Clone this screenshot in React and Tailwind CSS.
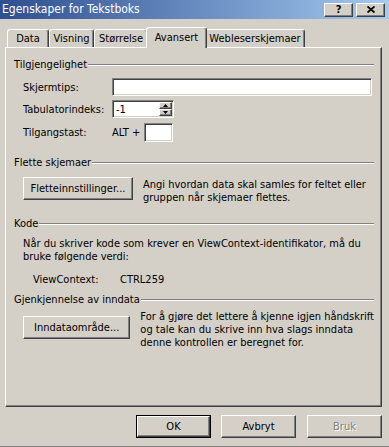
import { Fragment } from "react";

const font = "font-['DejaVu_Sans_Condensed','DejaVu_Sans',sans-serif]";
const raised =
  "border border-t-white border-l-white border-r-[#404040] border-b-[#404040] shadow-[inset_-1px_-1px_#808080]";
const sunken =
  "border border-t-[#808080] border-l-[#808080] border-r-white border-b-white shadow-[inset_1px_1px_#404040,inset_-1px_-1px_#d4d0c8]";

function GroupHeader({ children, className = "" }) {
  return (
    <div className={`flex h-[13px] items-center ${className}`}>
      <span className="whitespace-nowrap">{children}</span>
      <div className="ml-px flex-1 border-t border-b border-t-[#808080] border-b-white" />
    </div>
  );
}

function Lines({ lines, className = "" }) {
  return (
    <p className={`whitespace-nowrap ${className}`}>
      {lines.map((l, i) => (
        <Fragment key={i}>
          {l}
          {i < lines.length - 1 && <br />}
        </Fragment>
      ))}
    </p>
  );
}

function Tab({ label, w, active }) {
  if (active) {
    return (
      <div
        className={`relative z-10 -mx-[2px] -mb-px flex h-[21px] items-start justify-center rounded-t-[3px] border-t border-l border-r border-t-white border-l-white border-r-[#404040] bg-[#d4d0c8] pt-[3px] shadow-[inset_-1px_0_#808080] ${w}`}
      >
        {label}
      </div>
    );
  }
  return (
    <div
      className={`flex h-[18px] items-start justify-center rounded-t-[3px] border-t border-l border-r border-t-white border-l-white border-r-[#404040] pt-[2px] shadow-[inset_-1px_0_#808080] ${w}`}
    >
      {label}
    </div>
  );
}

function Button({ children, className = "", disabled, isDefault }) {
  if (isDefault) {
    return (
      <div className={`border border-black ${className}`}>
        <div className={`flex h-full w-full items-center justify-center ${raised}`}>{children}</div>
      </div>
    );
  }
  return (
    <div
      className={`flex items-center justify-center ${raised} ${
        disabled ? "text-[#808080] [text-shadow:1px_1px_0_#fff]" : ""
      } ${className}`}
    >
      {children}
    </div>
  );
}

function SpinArrow({ up }) {
  return (
    <div className={`flex h-1/2 w-full items-center justify-center bg-[#d4d0c8] ${raised}`}>
      <svg width="5" height="3" viewBox="0 0 5 3">
        <polygon points={up ? "2.5,0 5,3 0,3" : "0,0 5,0 2.5,3"} fill="#000" />
      </svg>
    </div>
  );
}

export default function App() {
  return (
    <div
      className={`${font} h-[447px] w-[389px] overflow-hidden border-b border-b-[#808080] bg-[#d4d0c8] text-[11px] leading-[13px] text-black`}
    >
      {/* title bar */}
      <div className="flex h-[19px] items-center bg-gradient-to-r from-[#2f4f90] to-[#a6caf0] pl-[2px] pr-[4px]">
        <span className="flex-1 text-[12px] text-white">Egenskaper for Tekstboks</span>
        <div className="flex gap-[3px]">
          <div className={`flex h-[14px] w-[29px] items-center justify-center bg-[#d4d0c8] text-[11px] font-bold ${raised}`}>
            ?
          </div>
          <div className={`flex h-[14px] w-[29px] items-center justify-center bg-[#d4d0c8] ${raised}`}>
            <svg width="8" height="7" viewBox="0 0 8 7">
              <path d="M0.5 0.5 L7.5 6.5 M7.5 0.5 L0.5 6.5" stroke="#000" strokeWidth="1.8" />
            </svg>
          </div>
        </div>
      </div>

      {/* tabs */}
      <div className="flex h-[28px] items-end pl-[7px]">
        <Tab label="Data" w="w-[42px]" />
        <Tab label="Visning" w="w-[45px]" />
        <Tab label="Størrelse" w="w-[54px]" />
        <Tab label="Avansert" w="w-[61px]" active />
        <Tab label="Webleserskjemaer" w="w-[100px]" />
      </div>

      {/* panel */}
      <div className="mx-[5px] h-[360px] w-[377px] border-t border-l border-r border-b border-t-white border-l-white border-r-[#404040] border-b-[#404040] pl-[8px] pr-[7px] shadow-[inset_-1px_-1px_#808080]">
        <GroupHeader className="mt-[10px]">Tilgjengelighet</GroupHeader>

        <div className="mt-[7px] flex h-[18px] items-center pl-[9px]">
          <span className="w-[89px]">Skjermtips:</span>
          <div className={`h-[18px] w-[260px] bg-white ${sunken}`} />
        </div>

        <div className="mt-[4px] flex h-[18px] items-center pl-[9px]">
          <span className="w-[89px]">Tabulatorindeks:</span>
          <div className={`flex h-[18px] w-[62px] items-stretch bg-white p-px ${sunken}`}>
            <span className="flex flex-1 items-center pl-[2px]">-1</span>
            <div className="flex w-[13px] flex-col">
              <SpinArrow up />
              <SpinArrow />
            </div>
          </div>
        </div>

        <div className="mt-[5px] flex h-[18px] items-center pl-[9px]">
          <span className="w-[89px]">Tilgangstast:</span>
          <span className="w-[32px]">ALT +</span>
          <div className={`h-[19px] w-[29px] bg-white ${sunken}`} />
        </div>

        <GroupHeader className="mt-[15px]">Flette skjemaer</GroupHeader>

        <div className="mt-[8px] flex items-start pl-[9px]">
          <Button className="h-[23px] w-[110px]">Fletteinnstillinger...</Button>
          <Lines
            className="ml-[10px] mt-[1px]"
            lines={["Angi hvordan data skal samles for feltet eller", "gruppen når skjemaer flettes."]}
          />
        </div>

        <GroupHeader className="mt-[13px]">Kode</GroupHeader>

        <Lines
          className="mt-[7px] pl-[9px]"
          lines={["Når du skriver kode som krever en ViewContext-identifikator, må du", "bruke følgende verdi:"]}
        />

        <div className="mt-[10px] flex pl-[19px]">
          <span className="w-[87px]">ViewContext:</span>
          <span>CTRL259</span>
        </div>

        <GroupHeader className="mt-[7px]">Gjenkjennelse av inndata</GroupHeader>

        <div className="mt-[4px] flex items-start pl-[9px]">
          <Button className="mt-[6px] h-[23px] w-[110px]">Inndataområde...</Button>
          <Lines
            className="ml-[10px]"
            lines={[
              "For å gjøre det lettere å kjenne igjen håndskrift",
              "og tale kan du skrive inn hva slags inndata",
              "denne kontrollen er beregnet for.",
            ]}
          />
        </div>
      </div>

      {/* dialog buttons */}
      <div className="mt-[8px] flex justify-end pr-[7px]">
        <Button isDefault className="mr-[10px] h-[23px] w-[75px]">
          OK
        </Button>
        <Button className="mr-[11px] h-[23px] w-[75px]">Avbryt</Button>
        <Button disabled className="h-[23px] w-[75px]">
          Bruk
        </Button>
      </div>
    </div>
  );
}
